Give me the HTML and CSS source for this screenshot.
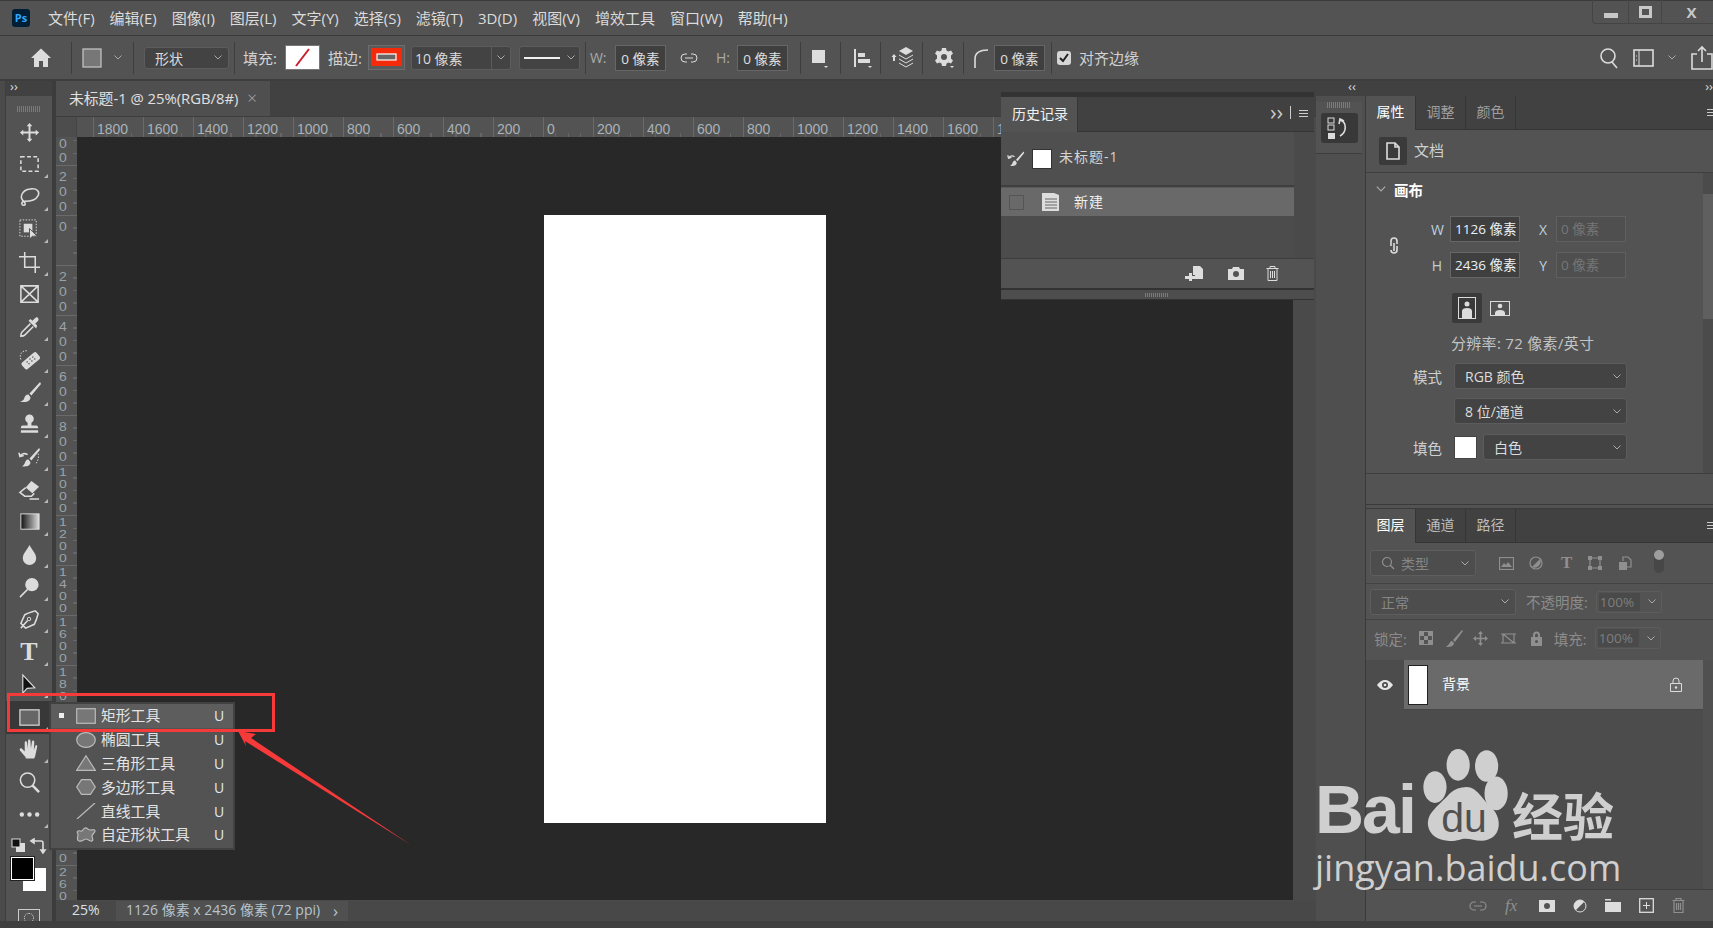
FILE: index.html
```html
<!DOCTYPE html>
<html>

<head lang="zh">
    <meta charset="UTF-8">
    <title>Photoshop</title>
    <link rel="stylesheet" href="styles.css">
</head>

<body>
    <!-- 菜单栏 -->
    <div class="menubar">
        <div class="ps-logo">Ps</div>
        <ul class="menu">
            <li>文件(F)</li><li>编辑(E)</li><li>图像(I)</li><li>图层(L)</li><li>文字(Y)</li><li>选择(S)</li>
            <li>滤镜(T)</li><li>3D(D)</li><li>视图(V)</li><li>增效工具</li><li>窗口(W)</li><li>帮助(H)</li>
        </ul>
        <div class="win-btns">
            <span class="win-btn"><i class="win-min"></i></span>
            <span class="win-btn win-btn2"><i class="win-max"></i></span>
            <span class="win-btn win-close">X</span>
        </div>
    </div>

    <!-- 选项栏 -->
    <div class="options">
        <svg class="ml30" width="22" height="22" viewBox="0 0 22 22"><path class="f" d="M11 1.500L21 11h-3v9h-5v-6H9v6H4v-9H1z"/></svg>
        <i class="sep ml19"></i>
        <svg class="ml10" width="20" height="22" viewBox="0 0 20 22"><rect x="1" y="2" width="18" height="18" fill="#777" stroke="#c8c8c8" stroke-width="1.200"/></svg>
        <svg class="chev ml12" viewBox="0 0 8 5"><path d="M.5.500L4 4 7.500.500"/></svg>
        <i class="sep ml11"></i>
        <div class="sel sel-mode ml10">形状<svg class="chev" viewBox="0 0 8 5"><path d="M.5.500L4 4 7.500.500"/></svg></div>
        <i class="sep ml5"></i>
        <span class="opt-label ml8">填充:</span>
        <svg class="swatch ml8" width="35" height="25" viewBox="0 0 35 25"><rect x=".5" y=".5" width="34" height="24" fill="#fff" stroke="#777"/><path d="M11 21L24 4" stroke="#c8202a" stroke-width="2"/></svg>
        <span class="opt-label ml8">描边:</span>
        <svg class="swatch ml6" width="37" height="25" viewBox="0 0 37 25"><rect x=".5" y=".5" width="36" height="24" fill="#5a5a5a" stroke="#6d6d6d"/><rect x="3" y="3" width="31" height="18" fill="#f52a0a"/><rect x="9" y="9" width="19" height="6" fill="#666" stroke="#fff" stroke-width="1.200"/></svg>
        <div class="sel sel-size ml6">10 像素<span class="sel-arrow"><svg class="chev" viewBox="0 0 8 5"><path d="M.5.500L4 4 7.500.500"/></svg></span></div>
        <div class="sel sel-line ml8"><i class="line-sample"></i><svg class="chev" viewBox="0 0 8 5"><path d="M.5.500L4 4 7.500.500"/></svg></div>
        <i class="sep ml5"></i>
        <span class="opt-label dim w18 ml4">W:</span>
        <div class="num ml7">0 像素</div>
        <svg class="ml14 link-h" width="18" height="12" viewBox="0 0 18 12"><path class="s" d="M7 2H5a4 4 0 0 0 0 8h2M11 2h2a4 4 0 0 1 0 8h-2M5 6h8"/></svg>
        <span class="opt-label dim w14 ml18">H:</span>
        <div class="num ml7">0 像素</div>
        <i class="sep ml12"></i>
        <svg class="ml10" width="17" height="22" viewBox="0 0 17 22"><rect x="1" y="3" width="13" height="13" fill="#ddd"/><path d="M13 19h4l-2 2z" fill="#ddd"/></svg>
        <i class="sep ml12"></i>
        <svg class="ml10" width="22" height="22" viewBox="0 0 22 22"><path class="f" d="M3 2h2v18H3zM7 6h7v4H7zM7 12h12v4H7z"/><path d="M17 19h4l-2 2z" fill="#ddd"/></svg>
        <i class="sep ml7"></i>
        <svg class="ml10" width="25" height="26" viewBox="0 0 25 26"><path class="f" d="M3 9l2.500 3H4v4H2v-4H.5zM15 2l7 4-7 4-7-4z"/><path class="s" d="M8 10l7 4 7-4M8 14l7 4 7-4M8 18l7 4 7-4"/></svg>
        <i class="sep ml6"></i>
        <svg class="ml11" width="22" height="22" viewBox="0 0 22 22"><path class="f" fill-rule="evenodd" d="M8 1h4l.5 2.500 2 1L17 3.500l2 3-2 2v3l2 2-2 3-2.500-1-2 1L12 19H8l-.5-2.500-2-1L3 16.500l-2-3 2-2v-3l-2-2 2-3 2.500 1 2-1zM10 7a3 3 0 1 0 0 6 3 3 0 0 0 0-6z"/><path d="M16 19h4l-2 2z" fill="#ddd"/></svg>
        <i class="sep ml7"></i>
        <svg class="ml9" width="16" height="22" viewBox="0 0 16 22"><path class="s s2" d="M2 21v-9c0-6 4-9 13-9"/></svg>
        <div class="num ml5">0 像素</div>
        <i class="sep ml6"></i>
        <span class="check ml5"><svg width="12" height="12" viewBox="0 0 12 12"><path d="M2 6l3 3 5-7" fill="none" stroke="#222" stroke-width="2"/></svg></span>
        <span class="opt-label ml8">对齐边缘</span>
        <div class="opts-right">
            <svg width="20" height="24" viewBox="0 0 20 24"><circle class="s s2" cx="9" cy="10" r="7"/><path class="s s2" d="M13 16l5 6"/></svg>
            <svg class="ml14" width="21" height="18" viewBox="0 0 21 18"><rect class="s s2" x="1" y="1" width="19" height="16"/><path class="s" d="M6 1v16M3 7h1M3 11h1"/></svg>
            <svg class="chev ml14" viewBox="0 0 8 5"><path d="M.5.500L4 4 7.500.500"/></svg>
            <svg class="ml14" width="23" height="26" viewBox="0 0 23 26"><path class="s s2" d="M7 9H2v15h20V9h-5M12 17V2M8 6l4-4 4 4"/></svg>
        </div>
    </div>

    <div class="workspace">
        <!-- 左侧工具栏 -->
        <div class="tools">
            <div class="collapse-bar">››</div>
            <div class="grip"></div>
            <div class="tool-list">
                <div class="tool no-tri"><svg viewBox="0 0 24 24"><path class="f" d="M12 2l3 3.500h-2V11h5.500V9L22 12l-3.500 3v-2H13v5.500h2L12 22l-3-3.500h2V13H5.500v2L2 12l3.500-3v2H11V5.500H9z"/></svg></div>
                <div class="tool"><svg viewBox="0 0 24 24"><rect class="s s2" x="3" y="4" width="18" height="15" stroke-dasharray="4 2.500"/></svg></div>
                <div class="tool"><svg viewBox="0 0 24 24"><path class="s s2" d="M6 16C1 12 4 4 13 3c7-1 10 3 8 7-2 4-7 6-14 6-2 0-3 1-3 2.500S7 21 7.500 19 5 16 6 16"/></svg></div>
                <div class="tool"><svg viewBox="0 0 24 24"><rect class="s" x="2" y="2" width="17" height="17" stroke-dasharray="1.500 1.500"/><rect class="f" x="6" y="6" width="9" height="9"/><path d="M12 11v11l3-3 5 0z" fill="#ddd" stroke="#535353"/></svg></div>
                <div class="tool"><svg viewBox="0 0 24 24"><path class="s s2" d="M7 1v16h16M1 6h17v17"/></svg></div>
                <div class="tool no-tri"><svg viewBox="0 0 24 24"><path class="s s2" d="M3 3h18v17H3zM3 3l18 17M21 3L3 20"/></svg></div>
                <div class="tool"><svg viewBox="0 0 24 24"><path class="s s2" d="M13 8l-9 9c-1 1-1 3-1 4 1 0 3 0 4-1l9-9"/><path class="f" d="M11 5l8 8 1-3-2-2 3-3c1.500-2-1-5-3-3l-3 3-2-2z"/></svg></div>
                <div class="tool"><svg viewBox="0 0 24 24"><path class="s" stroke-dasharray="1.500 1.500" d="M3 12C1 7 4 2 10 3"/><rect class="f" x="3" y="9" width="20" height="9" rx="2" transform="rotate(-40 13 13)"/><path d="M9 14l1 1M12 11l1 1M15 9l1 1M11 16l1 1M14 13l1 1M17 11l1 1" stroke="#666" stroke-width="1.500"/></svg></div>
                <div class="tool"><svg viewBox="0 0 24 24"><path class="f" d="M23 1L12 13l2 2L24 3zM11 14c-3 0-4 2-4.500 4-.5 2-2 3-4.500 3 5 2 11 1 11-4z"/></svg></div>
                <div class="tool"><svg viewBox="0 0 24 24"><circle class="f" cx="12" cy="6" r="4.500"/><path class="f" d="M10 9h4v4h5c1.500 0 2 1 2 3H3c0-2 .5-3 2-3h5zM3 18h18v2.500H3z"/></svg></div>
                <div class="tool"><svg viewBox="0 0 24 24"><path class="f" d="M22 2L12 13l2 2L23 4zM11 14c-3 0-3 2-4 4-.5 1.500-2 3-3 3 4 1 9 0 9-4z"/><path class="s s2" d="M2 11c1-3 5-4 8-2M1 7l1 4 4-1"/><path class="s" stroke-dasharray="1.500 1.500" d="M21 8c1 3 0 7-2 10"/></svg></div>
                <div class="tool"><svg viewBox="0 0 24 24"><path class="f" d="M14 3l8 6-7 7-7-6z"/><path class="s s2" d="M8 10l-6 5 5 4h7l3-3M12 22h10"/></svg></div>
                <div class="tool"><svg viewBox="0 0 24 24"><defs><linearGradient id="grad"><stop offset="0" stop-color="#111"/><stop offset="1" stop-color="#ddd"/></linearGradient></defs><rect x="3" y="3" width="19" height="16" fill="url(#grad)" stroke="#ddd"/></svg></div>
                <div class="tool"><svg viewBox="0 0 24 24"><path class="f" d="M12 2c3 6 7 9 7 14a7 7 0 0 1-14 0c0-5 4-8 7-14z"/></svg></div>
                <div class="tool"><svg viewBox="0 0 24 24"><circle class="f" cx="14.500" cy="9" r="7"/><path class="s s2" d="M10 14l-8 8"/></svg></div>
                <div class="tool"><svg viewBox="0 0 24 24"><path class="s s2" d="M8 21l-5-5 4-9c4-2 8-3 11-4l3 3c-1 4-2 7-4 11zM3 21l7-8"/><circle class="s" cx="11.500" cy="11.500" r="1.800"/></svg></div>
                <div class="tool tool-text">T</div>
                <div class="tool"><svg viewBox="0 0 24 24"><path d="M5 2v19l4.500-5 8-.5z" fill="#111" stroke="#ddd" stroke-width="1.200"/></svg></div>
                <div class="tool tool-on"><svg viewBox="0 0 24 24"><rect x="2" y="4" width="20" height="16" fill="#666" stroke="#ccc" stroke-width="1.400"/></svg></div>
                <div class="tool"><svg viewBox="0 0 24 24"><path class="f" d="M8 20l-6-7c-1-2 1-3 2-2l3 3 0-9c0-2 2-2 2.500 0l.5 6 .5-8c0-2 2.500-2 2.500 0l.5 8 1-7c.5-2 2.500-1.500 2.500.5l-.5 8 1.500-4c.5-2 2.500-1 2 1l-2 9c-.5 2-1 3-2 3h-7c-.5 0-1 0-1-1z"/></svg></div>
                <div class="tool no-tri"><svg viewBox="0 0 24 24"><circle class="s s2" cx="10" cy="9.500" r="7.500"/><path d="M15 15l7 7" stroke="#ddd" stroke-width="2.600"/></svg></div>
                <div class="tool"><svg viewBox="0 0 24 24"><circle class="f" cx="4" cy="12" r="2.300"/><circle class="f" cx="12" cy="12" r="2.300"/><circle class="f" cx="20" cy="12" r="2.300"/></svg></div>
            </div>
            <div class="color-ctrl">
                <svg width="36" height="16" viewBox="0 0 36 16"><rect x="5" y="5" width="9" height="9" fill="#ddd"/><rect x="1" y="1" width="8" height="8" fill="#111" stroke="#ddd"/><path class="s s2" d="M22 3h8a2 2 0 0 1 2 2v8M20 3l3-2v4zM32 15l-2-3h4z"/></svg>
            </div>
            <div class="color-pick">
                <i class="color-bg"></i>
                <i class="color-fg"></i>
            </div>
            <div class="quick-mask"><i></i></div>
        </div>

        <!-- 文档区域 -->
        <div class="doc-area">
            <div class="tabbar">
                <div class="doc-tab">未标题-1 @ 25%(RGB/8#)<span class="tab-x">×</span></div>
            </div>
            <div class="hruler-row">
                <div class="ruler-corner"></div>
                <div class="hruler">
                    <span>1800</span><span>1600</span><span>1400</span><span>1200</span><span>1000</span><span>800</span><span>600</span><span>400</span><span>200</span><span>0</span><span>200</span><span>400</span><span>600</span><span>800</span><span>1000</span><span>1200</span><span>1400</span><span>1600</span><span>1800</span><span>2000</span>
                </div>
                <div class="scroll-top"></div>
            </div>
            <div class="canvas-row">
                <div class="vruler">
                    <div class="vr-list">
                        <div class="vr-first"><span>0<br>0</span></div>
                        <div><span>2<br>0<br>0</span></div><div><span>0</span></div><div><span>2<br>0<br>0</span></div><div><span>4<br>0<br>0</span></div><div><span>6<br>0<br>0</span></div><div><span>8<br>0<br>0</span></div>
                        <div class="vr4"><span>1<br>0<br>0<br>0</span></div><div class="vr4"><span>1<br>2<br>0<br>0</span></div><div class="vr4"><span>1<br>4<br>0<br>0</span></div><div class="vr4"><span>1<br>6<br>0<br>0</span></div><div class="vr4"><span>1<br>8<br>0<br>0</span></div><div class="vr4"><span>2<br>0<br>0<br>0</span></div><div class="vr4"><span>2<br>2<br>0<br>0</span></div><div class="vr4"><span>2<br>4<br>0<br>0</span></div><div class="vr4 vr-last"><span>2<br>6<br>0</span></div>
                    </div>
                </div>
                <div class="canvas"><div class="page"></div></div>
                <div class="vscroll"></div>
            </div>
            <div class="status">
                <span class="zoom-val">25%</span>
                <span class="doc-info">1126 像素 x 2436 像素 (72 ppi)<b>›</b></span>
            </div>
        </div>

        <!-- 折叠面板条 -->
        <div class="dock">
            <div class="dock-top">
                <div class="grip"></div>
                <div class="dock-btn"><svg width="26" height="24" viewBox="0 0 26 24"><rect class="s" x="2" y="2" width="6" height="5"/><rect class="s" x="2" y="9" width="6" height="5"/><rect class="f" x="2" y="17" width="7" height="6"/><path class="s s2" d="M14 4c7 2 7 12 0 16M13 8l1-5 4 2"/></svg></div>
            </div>
        </div>

        <!-- 右侧面板 -->
        <div class="panels">
            <div class="collapse-right">
                <span>‹‹</span><span>››</span>
            </div>
            <div class="panel-props">
                <div class="tabs">
                    <span class="tab tab-on">属性</span><span class="tab">调整</span><span class="tab">颜色</span>
                    <span class="tab-menu"></span>
                </div>
                <div class="doc-row">
                    <span class="doc-icon"><svg width="16" height="18" viewBox="0 0 16 18"><path class="s s2" d="M2 1h8l4 4v12H2zM10 1v4h4"/></svg></span>
                    <span class="doc-name">文档</span>
                </div>
                <div class="props-body">
                    <div class="props-main">
                        <div class="props-head"><svg class="chev chev-lg" viewBox="0 0 8 5"><path d="M.5.500L4 4 7.500.500"/></svg>画布</div>
                        <div class="size-block">
                            <svg class="chain" width="12" height="20" viewBox="0 0 12 20"><path class="s s2" d="M3 9V4a3 3 0 0 1 6 0v3M3 13a3 3 0 0 0 6 0v-4M6 6v8"/></svg>
                            <div class="size-grid">
                                <label class="lb-w">W</label><div class="field">1126 像素</div><label class="lb-x">X</label><div class="field off">0 像素</div>
                                <label class="lb-w">H</label><div class="field">2436 像素</div><label class="lb-x">Y</label><div class="field off">0 像素</div>
                            </div>
                        </div>
                        <div class="orient">
                            <span class="orient-on"><svg width="18" height="22" viewBox="0 0 18 22"><rect class="s" x=".5" y=".5" width="17" height="21"/><circle class="f" cx="9" cy="7" r="2.500"/><path class="f" d="M4 21v-7c0-2 2-3 5-3s5 1 5 3v7z"/></svg></span>
                            <svg width="20" height="15" viewBox="0 0 20 15"><rect class="s" x=".5" y=".5" width="19" height="14"/><circle class="f" cx="10" cy="5" r="2.300"/><path class="f" d="M5 14v-2c0-2 2-3 5-3s5 1 5 3v2z"/></svg>
                        </div>
                        <div class="resolution">分辨率: 72 像素/英寸</div>
                        <div class="form-row"><label>模式</label><div class="sel sel-wide">RGB 颜色<svg class="chev" viewBox="0 0 8 5"><path d="M.5.500L4 4 7.500.500"/></svg></div></div>
                        <div class="form-row form-two"><label></label><div class="sel sel-wide">8 位/通道<svg class="chev" viewBox="0 0 8 5"><path d="M.5.500L4 4 7.500.500"/></svg></div></div>
                        <div class="form-row form-fill"><label>填色</label><i class="fill-swatch"></i><div class="sel sel-fill">白色<svg class="chev" viewBox="0 0 8 5"><path d="M.5.500L4 4 7.500.500"/></svg></div></div>
                    </div>
                    <div class="props-scroll"><i></i></div>
                </div>
                <div class="props-foot"></div>
            </div>

            <div class="panel-layers">
                <div class="tabs">
                    <span class="tab tab-on">图层</span><span class="tab tab-mid">通道</span><span class="tab tab-mid">路径</span>
                    <span class="tab-menu"></span>
                </div>
                <div class="layer-row filter-row">
                    <div class="sel sel-off sel-kind"><svg width="14" height="14" viewBox="0 0 14 14"><circle class="s-off" cx="6" cy="6" r="4.500"/><path class="s-off" d="M9 9l4 4"/></svg><span>类型</span><svg class="chev" viewBox="0 0 8 5"><path d="M.5.500L4 4 7.500.500"/></svg></div>
                    <svg class="ml23" width="15" height="13" viewBox="0 0 15 13"><rect class="s-off" x=".5" y=".5" width="14" height="12"/><path class="f-off" d="M2 10l3-4 2 2 2-3 4 5z"/></svg>
                    <svg class="ml15" width="14" height="14" viewBox="0 0 14 14"><circle class="s-off" cx="7" cy="7" r="6"/><path class="f-off" d="M11 3a6 6 0 0 1-8 8z"/></svg>
                    <span class="t-off ml18">T</span>
                    <svg class="ml16" width="14" height="14" viewBox="0 0 14 14"><path class="s-off" d="M2 2h10v10H2z"/><path class="f-off" d="M0 0h4v4H0zM10 0h4v4h-4zM0 10h4v4H0zM10 10h4v4h-4z"/></svg>
                    <svg class="ml17" width="13" height="15" viewBox="0 0 13 15"><path class="s-off" d="M4 5V1h5l3 3v7H8"/><rect class="f-off" x="0" y="6" width="8" height="8"/></svg>
                    <span class="toggle ml22"><i></i></span>
                </div>
                <div class="layer-row blend-row">
                    <div class="sel sel-off sel-blend">正常<svg class="chev" viewBox="0 0 8 5"><path d="M.5.500L4 4 7.500.500"/></svg></div>
                    <span class="off-label ml10">不透明度:</span>
                    <div class="pct ml8"><span>100%</span><svg class="chev" viewBox="0 0 8 5"><path d="M.5.500L4 4 7.500.500"/></svg></div>
                </div>
                <div class="layer-row lock-row">
                    <span class="off-label">锁定:</span>
                    <svg class="ml12" width="14" height="14" viewBox="0 0 14 14"><rect class="s-off" x=".5" y=".5" width="13" height="13"/><path class="f-off" d="M1 1h4v4H1zM9 1h4v4H9zM5 5h4v4H5zM1 9h4v4H1zM9 9h4v4H9z"/></svg>
                    <svg class="ml13" width="17" height="17" viewBox="0 0 17 17"><path class="f-off" d="M16 0L7 10l2 2L17 1zM6 11c-2 0-2 2-3 3-.5 1-2 2-3 3 3 0 8 0 8-4z"/></svg>
                    <svg class="ml10" width="15" height="15" viewBox="0 0 15 15"><path class="f-off" d="M7.500 0l2.500 3H8.300v3.700H12V5l3 2.500L12 10V8.300H8.300V12H10l-2.500 3L5 12h1.700V8.300H3V10L0 7.500 3 5v1.700h3.700V3H5z"/></svg>
                    <svg class="ml12" width="17" height="15" viewBox="0 0 17 15"><path class="s-off" d="M3 3h11v9H3zM3 3l11 9M1 3h2M14 3h2M1 12h2M14 12h2"/></svg>
                    <svg class="ml13" width="13" height="15" viewBox="0 0 13 15"><path class="f-off" fill-rule="evenodd" d="M3 6V4a3.500 3.500 0 0 1 7 0v2h2v9H1V6zM5 6h3V4a1.500 1.500 0 0 0-3 0zM6.500 9a1.500 1.500 0 1 0 0 3 1.500 1.500 0 0 0 0-3z"/></svg>
                    <span class="off-label ml11">填充:</span>
                    <div class="pct ml8"><span>100%</span><svg class="chev" viewBox="0 0 8 5"><path d="M.5.500L4 4 7.500.500"/></svg></div>
                </div>
                <div class="layer-list">
                    <div class="layer-item">
                        <span class="eye"><svg width="16" height="10" viewBox="0 0 16 10"><path d="M0 5c2-3 5-5 8-5s6 2 8 5c-2 3-5 5-8 5S2 8 0 5z" fill="#e6e6e6"/><circle cx="8" cy="5" r="3" fill="#4a4a4a"/><circle cx="8" cy="5" r="1.300" fill="#e6e6e6"/></svg></span>
                        <div class="layer-main">
                            <i class="thumb"></i>
                            <span class="layer-name">背景</span>
                            <svg class="layer-lock" width="12" height="15" viewBox="0 0 12 15"><path class="s" d="M.5 6.500h11v8H.5zM3 6.500V4a3 3 0 0 1 6 0v2.500"/><circle cx="6" cy="10.500" r="1.200" fill="#ddd"/></svg>
                        </div>
                    </div>
                </div>
                <div class="layer-foot">
                    <svg width="18" height="12" viewBox="0 0 18 12"><path class="s-off" d="M7 2H5a4 4 0 0 0 0 8h2M11 2h2a4 4 0 0 1 0 8h-2M5 6h8"/></svg>
                    <span class="fx">fx</span>
                    <svg width="16" height="12" viewBox="0 0 16 12"><path fill="#ddd" fill-rule="evenodd" d="M0 0h16v12H0zM8 3a3 3 0 1 0 0 6 3 3 0 0 0 0-6z"/></svg>
                    <svg width="14" height="14" viewBox="0 0 14 14"><circle cx="7" cy="7" r="6" fill="none" stroke="#ddd"/><path d="M11.300 2.700a6 6 0 0 1-8.600 8.600z" fill="#ddd" transform="rotate(180 7 7)"/></svg>
                    <svg width="16" height="13" viewBox="0 0 16 13"><path fill="#ddd" d="M0 0h6v1.500H0zM0 3h16v10H0z"/></svg>
                    <svg width="15" height="15" viewBox="0 0 15 15"><rect x=".7" y=".7" width="13.600" height="13.600" fill="none" stroke="#ddd" stroke-width="1.300"/><path d="M7.500 4v7M4 7.500h7" stroke="#ddd"/></svg>
                    <svg width="13" height="15" viewBox="0 0 13 15"><path class="s-off" d="M.5 2.500h12M4 2.500V.5h5v2M2 2.500v12h9v-12M4.500 5v7M6.500 5v7M8.500 5v7"/></svg>
                </div>
            </div>
        </div>
    </div>
    <div class="winbottom"></div>

    <!-- 历史记录浮动面板 -->
    <div class="history">
        <div class="hist-tabs">
            <span class="hist-tab">历史记录</span>
            <span class="hist-more">››<i></i></span>
            <span class="tab-menu hist-menu"></span>
        </div>
        <div class="hist-body">
            <div class="hist-list">
                <div class="hist-snap">
                    <svg width="18" height="18" viewBox="0 0 24 24"><path class="f" d="M22 2L12 13l2 2L23 4zM11 14c-3 0-3 2-4 4-.5 1.500-2 3-3 3 4 1 9 0 9-4z"/><path class="s s2" d="M2 11c1-3 5-4 8-2M1 7l1 4 4-1"/></svg>
                    <i class="snap-thumb"></i>
                    <span>未标题-1</span>
                </div>
                <div class="hist-state">
                    <i class="state-box"></i>
                    <svg width="19" height="20" viewBox="0 0 19 20"><path d="M1 1h12l5 2v16H1z" fill="#ddd"/><path d="M4 7h12M4 10h12M4 13h12M4 16h12" stroke="#666"/></svg>
                    <span>新建</span>
                </div>
            </div>
            <div class="hist-scroll"></div>
        </div>
        <div class="hist-foot">
            <svg width="18" height="15" viewBox="0 0 18 15"><path fill="#ddd" d="M8 0h7l3 3v10H10V9H8zM4 7h3v3h3v3H7v2H4v-2H0v-3h4z"/></svg>
            <svg width="16" height="13" viewBox="0 0 16 13"><path fill="#ddd" fill-rule="evenodd" d="M0 2h4l1-2h6l1 2h4v11H0zM8 4a3 3 0 1 0 0 6 3 3 0 0 0 0-6z"/></svg>
            <svg class="hist-trash" width="13" height="15" viewBox="0 0 13 15"><path class="s" d="M.5 2.500h12M4 2.500V.5h5v2M2 2.500v12h9v-12M4.500 5v7M6.500 5v7M8.500 5v7"/></svg>
        </div>
        <div class="hist-grip"><div class="grip"></div></div>
    </div>

    <!-- 工具弹出菜单 -->
    <div class="flyout">
        <div class="fly-item fly-on"><i class="dot"></i><svg viewBox="0 0 20 16"><rect x=".7" y=".7" width="18.600" height="14.600" fill="#777" stroke="#bbb" stroke-width="1.200"/></svg><span>矩形工具</span><b>U</b></div>
        <div class="fly-item"><i class="dot no-dot"></i><svg viewBox="0 0 20 16"><ellipse cx="10" cy="8" rx="9.300" ry="7.300" fill="#777" stroke="#bbb" stroke-width="1.200"/></svg><span>椭圆工具</span><b>U</b></div>
        <div class="fly-item"><i class="dot no-dot"></i><svg viewBox="0 0 20 16"><path d="M10 .8L19.300 15.300H.7z" fill="#777" stroke="#bbb" stroke-width="1.200"/></svg><span>三角形工具</span><b>U</b></div>
        <div class="fly-item"><i class="dot no-dot"></i><svg viewBox="0 0 20 16"><path d="M5.500.7h9L19.300 8l-4.800 7.300h-9L.7 8z" fill="#777" stroke="#bbb" stroke-width="1.200"/></svg><span>多边形工具</span><b>U</b></div>
        <div class="fly-item"><i class="dot no-dot"></i><svg viewBox="0 0 20 16"><path d="M1 16L19 0" stroke="#bbb" stroke-width="1.200"/></svg><span>直线工具</span><b>U</b></div>
        <div class="fly-item"><i class="dot no-dot"></i><svg viewBox="0 0 20 16"><path d="M9 1c2-1 3 2 5 2s5-1 5 1-3 3-3 5 2 4 0 5-4-2-6-2-4 3-7 2-1-4-1-6-2-3 0-4 3 1 4 0 1-2 3-3z" fill="#777" stroke="#bbb" stroke-width="1.200"/></svg><span>自定形状工具</span><b>U</b></div>
    </div>

    <!-- 红色标注 -->
    <div class="mark-box"></div>
    <svg class="mark-arrow" width="190" height="125" viewBox="230 725 190 125"><path fill="#f63a3a" d="M238 731L256 734 251 738 411 845 245 741 246 746z"/></svg>

    <!-- 水印 -->
    <div class="watermark">
        <div class="wm-top">
            <span class="wm-bai">Bai</span>
            <svg class="wm-paw" width="90" height="97" viewBox="0 0 85 92"><ellipse cx="36" cy="17" rx="11" ry="15"/><ellipse cx="63" cy="18" rx="11" ry="15"/><ellipse cx="14" cy="38" rx="11" ry="15"/><ellipse cx="72" cy="44" rx="11" ry="16"/><path d="M44 38c10 0 15 12 24 20 10 9 10 30-10 31-6 0-10-2-15-2s-9 3-17 2C8 88 3 72 11 62c6-8 12-12 17-18 5-4 10-6 16-6z"/></svg>
            <span class="wm-du">du</span>
            <span class="wm-jy">经验</span>
        </div>
        <div class="wm-url">jingyan.baidu.com</div>
    </div>
</body>

</html>
```

FILE: styles.css
```css
* {
    padding: 0;
    margin: 0;
    box-sizing: border-box;
}

html,
body {
    width: 1713px;
    height: 928px;
    overflow: hidden;
}

body {
    position: relative;
    display: flex;
    flex-direction: column;
    background: #535353;
    color: #d8d8d8;
    font-family: "Open Sans", "Noto Sans CJK SC", sans-serif;
    font-size: 14px;
}

i {
    display: block;
    font-style: normal;
}

ul {
    list-style: none;
}

svg {
    display: block;
    flex: none;
}

/* 图标公用 */
.s {
    fill: none;
    stroke: #dcdcdc;
    stroke-width: 1;
}

.s2 {
    stroke-width: 1.600;
}

.f {
    fill: #dcdcdc;
}

.s-off {
    fill: none;
    stroke: #8f8f8f;
    stroke-width: 1.200;
}

.f-off {
    fill: #8f8f8f;
}

.chev {
    width: 8px;
    height: 5px;
    fill: none;
    stroke: #aaa;
    stroke-width: 1;
}

.ml4 { margin-left: 4px; }
.ml5 { margin-left: 5px; }
.ml6 { margin-left: 6px; }
.ml7 { margin-left: 7px; }
.ml8 { margin-left: 8px; }
.ml9 { margin-left: 9px; }
.ml10 { margin-left: 10px; }
.ml11 { margin-left: 11px; }
.ml12 { margin-left: 12px; }
.ml13 { margin-left: 13px; }
.ml14 { margin-left: 14px; }
.ml15 { margin-left: 15px; }
.ml16 { margin-left: 16px; }
.ml17 { margin-left: 17px; }
.ml18 { margin-left: 18px; }
.ml19 { margin-left: 19px; }
.ml22 { margin-left: 22px; }
.ml23 { margin-left: 23px; }
.ml30 { margin-left: 30px; }

/* 菜单栏 */
.menubar {
    display: flex;
    align-items: flex-start;
    flex: none;
    height: 36px;
    padding-left: 12px;
    background: #535353;
    border-top: 1px solid #3c3c3c;
    border-bottom: 1px solid #3a3a3a;
}

.ps-logo {
    width: 18px;
    height: 18px;
    margin-top: 8px;
    border-radius: 3px;
    background: #001e36;
    color: #31a8ff;
    font-size: 11px;
    font-weight: 700;
    line-height: 18px;
    text-align: center;
}

.menu {
    display: flex;
    gap: 15px;
    margin-left: 18px;
    line-height: 34px;
    font-size: 15px;
}

.menu li {
    white-space: nowrap;
    color: #dcdcdc;
}

.win-btns {
    display: flex;
    margin-left: auto;
    height: 24px;
    width: 121px;
    margin-top: -1px;
    border-left: 1px solid #444;
    border-bottom: 1px solid #444;
    border-bottom-left-radius: 4px;
}

.win-btn {
    display: flex;
    align-items: center;
    justify-content: center;
    width: 36px;
    border-right: 1px solid #464646;
    color: #c8c8c8;
    font-weight: 700;
    font-size: 15px;
}

.win-btn2 {
    width: 33px;
}

.win-close {
    flex: 1;
    border-right: 0;
    padding-left: 8px;
}

.win-min {
    width: 14px;
    height: 5px;
    margin-top: 8px;
    background: #c8c8c8;
}

.win-max {
    width: 13px;
    height: 12px;
    border: 3px solid #c8c8c8;
}

/* 选项栏 */
.options {
    display: flex;
    align-items: center;
    flex: none;
    height: 44px;
    background: #535353;
    border-bottom: 1px solid #3d3d3d;
}

.sep {
    width: 1px;
    height: 32px;
    background: #3d3d3d;
    flex: none;
}

.opt-label {
    font-size: 15px;
    color: #d2d2d2;
    white-space: nowrap;
}

.dim {
    color: #aaa;
    font-size: 14px;
}

.w18 {
    width: 18px;
}

.w14 {
    width: 14px;
}

.sel {
    display: flex;
    align-items: center;
    justify-content: space-between;
    height: 22px;
    padding: 0 6px 0 10px;
    background: #434343;
    border: 1px solid #5c5c5c;
    border-radius: 3px;
    color: #dcdcdc;
    font-size: 14px;
    white-space: nowrap;
    flex: none;
}

.sel-mode {
    width: 85px;
}

.sel-size {
    width: 100px;
    height: 24px;
    padding: 0 0 0 3px;
}

.sel-arrow {
    display: flex;
    align-items: center;
    justify-content: center;
    width: 19px;
    height: 100%;
    border-left: 1px solid #5c5c5c;
}

.sel-line {
    width: 61px;
    height: 24px;
    padding: 0 4px 0 4px;
}

.line-sample {
    width: 36px;
    height: 2px;
    background: #f0f0f0;
}

.num {
    display: flex;
    align-items: center;
    justify-content: center;
    width: 51px;
    height: 26px;
    background: #3f3f3f;
    border: 1px solid #666;
    color: #e0e0e0;
    font-size: 13.500px;
    white-space: nowrap;
    flex: none;
}

.check {
    display: flex;
    align-items: center;
    justify-content: center;
    width: 14px;
    height: 14px;
    background: #d6d6d6;
    border-radius: 3px;
    flex: none;
}

.opts-right {
    display: flex;
    align-items: center;
    margin-left: auto;
    margin-right: 0;
}

/* 主体 */
.workspace {
    display: flex;
    flex: none;
    height: 841px;
    border-top: 1px solid #3d3d3d;
}

.winbottom {
    flex: 1;
    background: #3f3f3f;
}

/* 工具栏 */
.tools {
    width: 56px;
    flex: none;
    padding-left: 1px;
    padding-right: 4px;
    background: #535353;
    border-left: 5px solid #4a4a4a;
    box-shadow: inset 1px 0 0 #3e3e3e, inset -4px 0 0 #3c3c3c;
}

.collapse-bar {
    height: 15px;
    padding-left: 4px;
    background: #414141;
    color: #ddd;
    font-size: 13px;
    line-height: 11px;
}

.grip {
    height: 6px;
    margin: 10px auto 4px;
    width: 24px;
    background: repeating-linear-gradient(90deg, #7a7a7a 0, #7a7a7a 1px, transparent 1px, transparent 2px);
}

.tool-list {
    display: flex;
    flex-direction: column;
}

.tool {
    position: relative;
    display: flex;
    align-items: center;
    justify-content: center;
    height: 32.500px;
}

.tool svg {
    width: 23px;
    height: 23px;
}

.tool::after {
    content: "";
    position: absolute;
    right: 4px;
    bottom: 3px;
    border-left: 4px solid transparent;
    border-bottom: 4px solid #b8b8b8;
}

.no-tri::after {
    display: none;
}

.tool-on {
    background: #383838;
}

.tool-text {
    font-family: "Liberation Serif", serif;
    font-size: 26px;
    font-weight: 700;
    color: #dcdcdc;
}

.color-ctrl {
    padding: 7px 0 0 5px;
}

.color-pick {
    position: relative;
    height: 36px;
    margin-top: 3px;
}

.color-fg,
.color-bg {
    position: absolute;
    width: 23px;
    height: 23px;
    border: 1px solid #fff;
}

.color-fg {
    left: 5px;
    top: 0;
    background: #000;
    outline: 1px solid #222;
}

.color-bg {
    left: 17px;
    top: 11px;
    background: #fff;
}

.quick-mask {
    width: 22px;
    height: 18px;
    margin: 16px 0 0 12px;
    border: 1px solid #ccc;
    padding: 3px 5px;
}

.quick-mask i {
    width: 10px;
    height: 10px;
    border: 1px dotted #ddd;
    border-radius: 50%;
}

/* 文档区 */
.doc-area {
    display: flex;
    flex-direction: column;
    width: 1260px;
    flex: none;
}

.tabbar {
    height: 35px;
    flex: none;
    background: #414141;
}

.doc-tab {
    display: flex;
    align-items: center;
    width: 214px;
    height: 35px;
    padding: 0 0 3px 13px;
    background: #4f4f4f;
    color: #e0e0e0;
    font-size: 14.800px;
    white-space: nowrap;
}

.tab-x {
    margin-left: 9px;
    font-size: 17px;
    color: #aaa;
    font-weight: 300;
}

.hruler-row {
    display: flex;
    height: 21px;
    flex: none;
    background: #535353;
    border-top: 1px solid #3d3d3d;
}

.ruler-corner {
    width: 21px;
    flex: none;
    border-right: 1px solid #454545;
    background: #4d4d4d;
}

.hruler {
    display: flex;
    flex: 1;
    padding-left: 16px;
    overflow: hidden;
    background: repeating-linear-gradient(90deg, #666 0, #666 1px, transparent 1px, transparent 12.500px) 16px bottom / 100% 4px no-repeat;
}

.hruler span {
    width: 50px;
    flex: none;
    padding-left: 3px;
    border-left: 1px solid #6a6a6a;
    color: #a9b2b6;
    font-size: 14px;
    line-height: 24px;
    font-family: "Liberation Sans", sans-serif;
}

.scroll-top {
    width: 23px;
    flex: none;
    background: #4a4a4a;
}

.canvas-row {
    display: flex;
    flex: 1;
    min-height: 0;
}

.vruler {
    width: 21px;
    flex: none;
    overflow: hidden;
    background: repeating-linear-gradient(180deg, #666 0, #666 1px, transparent 1px, transparent 12.500px) right 3px / 4px 100% no-repeat #535353;
    background-color: #535353;
}

.vr-list div {
    height: 50px;
    padding: 2.500px 0 0 3px;
    border-top: 1px solid #6a6a6a;
    color: #9aa4a8;
    font-size: 14px;
    font-family: "Liberation Sans", sans-serif;
}

/* 竖向刻度数字被压扁，行距由 scaleY 控制 */
.vr-list span {
    display: block;
    line-height: 16px;
    transform: scaleY(.9375);
    transform-origin: top;
}

.vr-list .vr4 {
    padding-top: 1px;
}

.vr-list .vr4 span {
    transform: scaleY(.73);
}

.vr-list .vr-first {
    height: 28px;
    padding-top: 0;
    border-top: 0;
}

.vr-list .vr-first span {
    transform: scaleY(.85);
}

.vr-list .vr-last {
    height: 36px;
}

.canvas {
    display: flex;
    flex: 1;
    align-items: center;
    justify-content: center;
    background: #282828;
}

.page {
    width: 282px;
    height: 608px;
    background: #fff;
}

.vscroll {
    width: 23px;
    flex: none;
    background: #4a4a4a;
}

.status {
    display: flex;
    flex: none;
    height: 21px;
    background: #484848;
    border-top: 1px solid #4a4a4a;
    font-size: 14px;
    line-height: 18px;
}

.zoom-val {
    width: 60px;
    padding-left: 16px;
    color: #d6e2e8;
}

.doc-info {
    display: flex;
    justify-content: space-between;
    width: 232px;
    padding: 0 10px;
    background: #505050;
    color: #b8c4cc;
    white-space: nowrap;
}

.doc-info b {
    font-weight: 400;
    font-size: 17px;
    line-height: 19px;
}

/* 折叠条 */
.dock {
    width: 50px;
    flex: none;
    padding-top: 15px;
    padding-right: 3px;
    background: linear-gradient(#414141 15px, #4f4f4f 15px);
    border-right: 1px solid #3a3a3a;
}

.dock-top {
    height: 52px;
    border-bottom: 1px solid #3e3e3e;
    background: #535353;
}

.dock .grip {
    margin: 6px auto 5px;
}

.dock-btn {
    display: flex;
    align-items: center;
    justify-content: center;
    width: 37px;
    height: 30px;
    margin: 0 auto;
    background: #383838;
    border-radius: 3px;
}

/* 右侧面板 */
.panels {
    display: flex;
    flex-direction: column;
    flex: 1;
    min-width: 0;
}

.collapse-right {
    display: flex;
    justify-content: space-between;
    height: 15px;
    flex: none;
    background: #414141;
    color: #ddd;
    font-size: 13px;
    line-height: 11px;
    margin-left: -50px;
    padding: 0 0 0 32px;
}

.tabs {
    position: relative;
    display: flex;
    flex: none;
    height: 34px;
    background: #414141;
    border-bottom: 1px solid #353535;
}

.tab {
    width: 50px;
    line-height: 31px;
    text-align: center;
    border-right: 1px solid #353535;
    color: #9e9e9e;
    font-size: 14px;
}

.tab-on {
    width: 50px;
    height: 34px;
    background: #535353;
    color: #fff;
}

.tab-mid {
    color: #bdbdbd;
}

.tab-menu {
    position: absolute;
    right: -3px;
    top: 13px;
    width: 9px;
    height: 7px;
    border-top: 1px solid #ccc;
    border-bottom: 1px solid #ccc;
    background: linear-gradient(#ccc, #ccc) center / 100% 1px no-repeat;
}

.panel-props {
    display: flex;
    flex-direction: column;
    flex: none;
    height: 409px;
    background: #535353;
    border-bottom: 1px solid #3a3a3a;
}

.doc-row {
    display: flex;
    align-items: center;
    flex: none;
    height: 43px;
    padding-left: 13px;
    border-bottom: 1px solid #3e3e3e;
    color: #cfcfcf;
    font-size: 15px;
}

.doc-name {
    margin-top: -4px;
}

.doc-icon {
    display: flex;
    align-items: center;
    justify-content: center;
    width: 28px;
    height: 28px;
    margin-right: 7px;
    background: #3a3a3a;
    border-radius: 2px;
}

.props-body {
    display: flex;
    flex: none;
    height: 301px;
    border-bottom: 1px solid #3e3e3e;
}

.props-main {
    flex: 1;
}

.props-head {
    display: flex;
    align-items: center;
    height: 32px;
    padding-left: 10px;
    color: #fff;
    font-size: 14.500px;
    font-weight: 700;
}

.chev-lg {
    width: 10px;
    height: 6px;
    margin-right: 8px;
}

.size-block {
    display: flex;
    align-items: center;
    height: 62px;
    margin-top: 11px;
}

.chain {
    margin-left: 22px;
}

.size-grid {
    display: grid;
    grid-template-columns: 19px 70px 36px 70px;
    grid-template-rows: 26px 26px;
    gap: 10px 0;
    margin-left: 31px;
    align-items: center;
}

.lb-w {
    text-align: right;
    padding-right: 8px;
    font-size: 14px;
    color: #bcd0de;
}

.lb-x {
    text-align: right;
    padding-right: 9px;
    font-size: 14px;
    color: #bcd0de;
}

.field {
    height: 26px;
    padding-left: 4px;
    background: #3f3f3f;
    border: 1px solid #666;
    font-size: 13.500px;
    line-height: 24px;
    color: #ebf2f7;
    white-space: nowrap;
}

.field.off {
    background: #4f4f4f;
    border-color: #606060;
    color: #767676;
}

.orient {
    display: flex;
    align-items: center;
    gap: 8px;
    height: 30px;
    margin: 15px 0 0 86px;
}

.orient-on {
    display: flex;
    align-items: center;
    justify-content: center;
    width: 30px;
    height: 30px;
    background: #3a3a3a;
    border-radius: 2px;
}

.resolution {
    margin: 8px 0 0 85px;
    height: 24px;
    line-height: 24px;
    color: #c4c4c4;
    font-size: 15px;
    letter-spacing: .3px;
    white-space: nowrap;
}

.form-row {
    display: flex;
    align-items: center;
    height: 26px;
    margin-top: 8px;
}

.form-row label {
    width: 88px;
    padding-left: 47px;
    color: #cfcfcf;
    font-size: 14.500px;
    flex: none;
}

.sel-wide {
    width: 173px;
    height: 26px;
    padding-right: 5px;
}

.form-two {
    margin-top: 9px;
}

.form-fill {
    margin-top: 10px;
}

.fill-swatch {
    width: 23px;
    height: 23px;
    margin-right: 6px;
    background: #fff;
    border: 1px solid #444;
    flex: none;
}

.sel-fill {
    width: 144px;
    height: 26px;
    padding-right: 5px;
}

.props-scroll {
    width: 10px;
    flex: none;
    background: #4b4b4b;
}

.props-scroll i {
    height: 125px;
    margin-top: 21px;
    background: #5f5f5f;
}

.props-foot {
    flex: 1;
}

.panel-layers {
    display: flex;
    flex-direction: column;
    margin-top: 3px;
    flex: 1;
    min-height: 0;
    background: #535353;
    border-top: 1px solid #3a3a3a;
}

.layer-row {
    display: flex;
    align-items: center;
    flex: none;
    border-bottom: 1px solid #434343;
}

.filter-row {
    height: 41px;
    padding-left: 4px;
}

.blend-row {
    height: 36px;
    padding-left: 4px;
}

.lock-row {
    height: 40px;
    padding: 0 0 4px 8px;
    border-bottom: 0;
}

.sel-off {
    background: #4d4d4d;
    border-color: #5e5e5e;
    color: #868686;
    height: 26px;
}

.sel-kind {
    width: 106px;
    padding-left: 10px;
}

.sel-kind span {
    flex: 1;
    padding-left: 6px;
}

.sel-blend {
    width: 146px;
}

.t-off {
    font-family: "Liberation Serif", serif;
    font-weight: 700;
    font-size: 17px;
    color: #8f8f8f;
}

.toggle {
    position: relative;
    width: 10px;
    height: 20px;
    background: #474747;
    border-radius: 5px;
}

.toggle i {
    position: absolute;
    top: -3px;
    left: 0;
    width: 10px;
    height: 10px;
    background: #9e9e9e;
    border-radius: 50%;
}

.off-label {
    color: #8c8c8c;
    font-size: 14.500px;
    white-space: nowrap;
}

.pct {
    display: flex;
    align-items: center;
    width: 66px;
    height: 22px;
    padding-left: 2px;
    border: 1px solid #5c5c5c;
    border-radius: 3px;
    color: #7e7e7e;
    font-size: 13.500px;
    flex: none;
}

.pct span {
    width: 41px;
    padding-left: 1px;
    background: #4a4a4a;
    line-height: 18px;
}

.pct .chev {
    margin-left: 8px;
}

.layer-list {
    flex: 1;
    min-height: 0;
    background: linear-gradient(90deg, #4c4c4c 337px, #505050 337px);
}

.layer-item {
    display: flex;
    align-items: center;
    height: 50px;
}

.eye {
    width: 38px;
    padding-left: 11px;
    flex: none;
}

.layer-main {
    display: flex;
    align-items: center;
    width: 299px;
    height: 50px;
    padding-left: 4px;
    background: #6a6a6a;
    border-bottom: 1px solid #474747;
}

.thumb {
    width: 20px;
    height: 40px;
    background: #fff;
    border: 1px solid #222;
}

.layer-name {
    margin: -3px 0 0 14px;
    color: #fff;
    font-size: 14px;
}

.layer-lock {
    margin-left: auto;
    margin-right: 21px;
}

.layer-foot {
    display: flex;
    align-items: center;
    flex: none;
    height: 32px;
    padding-left: 103px;
    gap: 18px;
    border-top: 1px solid #3f3f3f;
    background: #535353;
}

.fx {
    width: 16px;
    font-family: "Liberation Serif", serif;
    font-style: italic;
    font-size: 17px;
    color: #8f8f8f;
}

/* 历史记录 */
.history {
    position: absolute;
    left: 1001px;
    top: 92px;
    display: flex;
    flex-direction: column;
    width: 313px;
    height: 208px;
    background: #535353;
    border-top: 5px solid #333;
}

.hist-tabs {
    position: relative;
    display: flex;
    flex: none;
    height: 35px;
    background: #414141;
    border-bottom: 1px solid #353535;
}

.hist-tab {
    width: 77px;
    height: 35px;
    padding-left: 11px;
    line-height: 33px;
    background: #535353;
    color: #f0f0f0;
    font-size: 14px;
    border-right: 1px solid #353535;
}

.hist-more {
    position: absolute;
    left: 269px;
    top: 1px;
    display: flex;
    color: #ccc;
    font-size: 22px;
    line-height: 26px;
}

.hist-more i {
    width: 1px;
    height: 13px;
    margin: 8px 0 0 7px;
    background: #ccc;
}

.hist-menu {
    right: 6px;
}

.hist-body {
    display: flex;
    flex: none;
    height: 126px;
}

.hist-list {
    flex: 1;
    background: #4c4c4c;
}

.hist-snap {
    display: flex;
    align-items: center;
    height: 55px;
    padding: 0 0 0 6px;
    background: #4f4f4f;
    border-bottom: 2px solid #3f3f3f;
    color: #d4d4d4;
    font-size: 14px;
}

.snap-thumb {
    width: 20px;
    height: 20px;
    margin: 0 7px;
    background: #fff;
    border: 1px solid #333;
}

.hist-snap span {
    margin-top: -5px;
    letter-spacing: 1px;
}

.hist-state {
    display: flex;
    align-items: center;
    height: 29px;
    padding-left: 8px;
    background: #696969;
    color: #f0f0f0;
    font-size: 14px;
    border-top: 1px solid #5b5b5b;
}

.state-box {
    width: 15px;
    height: 15px;
    margin-right: 17px;
    border: 1px solid #555;
}

.hist-state span {
    margin: -3px 0 0 14px;
    letter-spacing: 1px;
}

.hist-scroll {
    width: 20px;
    flex: none;
    background: #4a4a4a;
}

.hist-foot {
    display: flex;
    align-items: center;
    flex: none;
    height: 32px;
    padding-left: 184px;
    gap: 25px;
    border-top: 1px solid #3e3e3e;
    border-bottom: 2px solid #333;
}

.hist-trash {
    margin-left: -3px;
}

.hist-grip {
    flex: 1;
    background: #4d4d4d;
    border-bottom: 1px solid #333;
}

.hist-grip .grip {
    margin: 3px 0 0 144px;
    height: 4px;
}

/* 弹出菜单 */
.flyout {
    position: absolute;
    left: 49px;
    top: 702px;
    width: 186px;
    height: 148px;
    background: #535353;
    border: 2px solid #414141;
    display: flex;
    flex-direction: column;
}

.fly-item {
    display: flex;
    align-items: center;
    flex: none;
    height: 23.800px;
    padding-left: 8px;
    color: #e4e4e4;
    font-size: 14.800px;
    white-space: nowrap;
}

.fly-on {
    background: #5d5d5d;
}

.dot {
    width: 5px;
    height: 5px;
    margin-right: 12px;
    background: #eee;
    flex: none;
}

.no-dot {
    background: none;
}

.fly-item svg {
    width: 20px;
    height: 16px;
    margin-right: 5px;
}

.fly-item span {
    flex: 1;
    margin-top: -2px;
}

.fly-item b {
    width: 19px;
    font-weight: 400;
    color: #dfeaf5;
    font-size: 14px;
}

/* 标注 */
.mark-box {
    position: absolute;
    left: 7px;
    top: 693px;
    width: 268px;
    height: 39px;
    border: 3px solid #f63a3a;
}

.mark-arrow {
    position: absolute;
    left: 230px;
    top: 725px;
}

/* 水印 */
.watermark {
    position: absolute;
    left: 1315px;
    top: 740px;
    width: 320px;
    color: #cfcfcf;
    pointer-events: none;
}

.wm-top {
    position: relative;
    height: 108px;
}

.wm-bai {
    position: absolute;
    left: 0;
    top: 24px;
    font-family: "Liberation Sans", sans-serif;
    font-size: 68px;
    font-weight: 700;
    line-height: 90px;
    letter-spacing: -2px;
}

.wm-paw {
    position: absolute;
    left: 105px;
    top: 7px;
    fill: #cfcfcf;
}

.wm-du {
    position: absolute;
    left: 121px;
    top: 56px;
    width: 56px;
    text-align: center;
    font-family: "Liberation Sans", sans-serif;
    font-size: 41px;
    line-height: 44px;
    color: #505050;
}

.wm-jy {
    position: absolute;
    left: 197px;
    top: 44px;
    font-family: "Noto Sans CJK SC", sans-serif;
    font-size: 51px;
    font-weight: 700;
    line-height: 60px;
    white-space: nowrap;
}

.wm-url {
    font-family: "Open Sans", sans-serif;
    font-size: 36px;
    line-height: 40px;
    white-space: nowrap;
}
```
